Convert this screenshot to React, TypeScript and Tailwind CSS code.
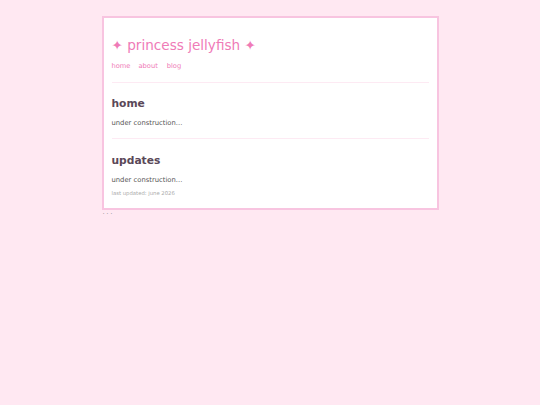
export default function App() {
  return (
    <div className="min-h-[405px] w-full bg-[#ffe8f2] pt-[16px]" style={{ fontFamily: '"DejaVu Sans", Verdana, sans-serif' }}>
      <div className="mx-auto w-[337px] border-2 border-[#f8c4e0] bg-white px-[8px] pt-[17px] pb-[11px]">
        <h1 className="h-[20px] text-[13.6px] leading-[20px] text-[#ef7bb7]">✦ princess jellyfish ✦</h1>
        <nav className="mt-[6px] flex h-[10px] gap-[8px] text-[6.7px] leading-[10px] text-[#ef7bb7]">
          <span>home</span>
          <span>about</span>
          <span className="ml-[1px]">blog</span>
        </nav>
        <div className="mt-[11px] h-px bg-[#fdeaf3]" />
        <h2 className="mt-[14px] h-[14px] text-[10.7px] font-bold leading-[14px] text-[#5a4858]">home</h2>
        <p className="mt-[7px] h-[10px] text-[6.8px] leading-[10px] text-[#555]">under construction...</p>
        <div className="mt-[10px] h-px bg-[#fdeaf3]" />
        <h2 className="mt-[15px] h-[14px] text-[10.7px] font-bold leading-[14px] text-[#5a4858]">updates</h2>
        <p className="mt-[7px] h-[10px] text-[6.8px] leading-[10px] text-[#555]">under construction...</p>
        <p className="mt-[4px] h-[8px] text-[5.3px] leading-[8px] text-[#aaa]">last updated: june 2026</p>
      </div>
      <div className="mx-auto w-[337px] pl-[1px] text-[7px] leading-[5px] tracking-[1.6px] text-[#999]">...</div>
    </div>
  );
}
